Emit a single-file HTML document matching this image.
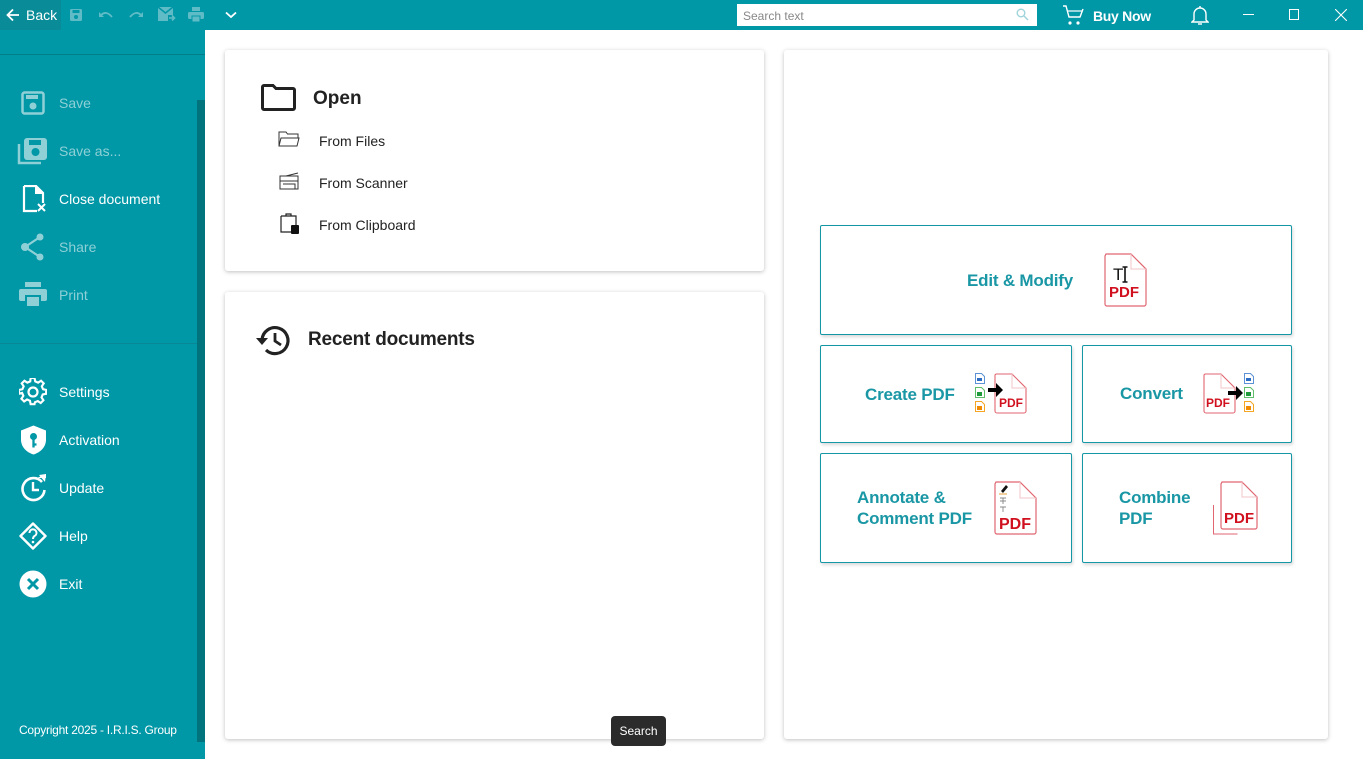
<!DOCTYPE html>
<html><head><meta charset="utf-8"><style>
*{margin:0;padding:0;box-sizing:border-box}
body{width:1363px;height:759px;overflow:hidden;background:#fff;font-family:"Liberation Sans",sans-serif;position:relative}
.abs{position:absolute}
.top{left:0;top:0;width:1363px;height:30px;background:#0097a6}
.side{left:0;top:30px;width:205px;height:729px;background:#0097a6}
.strip{left:197px;top:100px;width:8px;height:642px;background:#00737c}
.si{position:absolute;left:59px;font-size:14px;color:#fff;transform:translateY(-50%)}
.dim{color:#8fd0d7}
.ic{position:absolute;left:19px;transform:translateY(-50%)}
.card{position:absolute;background:#fff;box-shadow:0 1px 4px rgba(0,0,0,.25);border-radius:3px}
.tile{position:absolute;border:1px solid #1597a5;background:#fff;box-shadow:1px 2px 3px rgba(0,0,0,.15);border-radius:2px}
.tt{position:absolute;color:#1a97a5;font-size:17px;font-weight:bold;line-height:21px;letter-spacing:-0.2px}
.ot{position:absolute;font-size:14px;color:#222;transform:translateY(-50%)}
</style></head><body>
<div class="abs top"></div>
<div class="abs" style="left:0;top:0;width:61px;height:30px;background:#0a8b98"></div>
<svg class="abs" style="left:6px;top:8px" width="14" height="14" viewBox="0 0 14 14"><path d="M13 7H2M7 1.5L1.5 7 7 12.5" stroke="#fff" stroke-width="1.8" fill="none"/></svg>
<div class="abs" style="left:26px;top:7px;color:#fff;font-size:14px">Back</div>
<svg class="abs" style="left:69px;top:8px" width="14" height="14"><rect x="1" y="1" width="12" height="12" rx="1.5" fill="#5fbcc6"/><rect x="3.5" y="2" width="7" height="3" fill="#0097a6"/><circle cx="7" cy="9" r="2" fill="#0097a6"/></svg>
<svg class="abs" style="left:98px;top:9px" width="16" height="12"><path d="M3 6 Q8 1 14 8" stroke="#5fbcc6" stroke-width="1.8" fill="none"/><path d="M1 3v5h5z" fill="#5fbcc6"/></svg>
<svg class="abs" style="left:128px;top:9px" width="16" height="12"><path d="M13 6 Q8 1 2 8" stroke="#5fbcc6" stroke-width="1.8" fill="none"/><path d="M15 3v5h-5z" fill="#5fbcc6"/></svg>
<svg class="abs" style="left:158px;top:6px" width="18" height="17"><path d="M0 1h15v8h-5v6H0z" fill="#5fbcc6"/><path d="M0 1l7.5 6 7.5-6" stroke="#0097a6" stroke-width="1.5" fill="none"/><path d="M11 12h5M14 9.5l2.5 2.5-2.5 2.5" stroke="#5fbcc6" stroke-width="1.6" fill="none"/></svg>
<svg class="abs" style="left:188px;top:7px" width="16" height="16"><rect x="4" y="0" width="8" height="4" fill="#5fbcc6"/><rect x="0" y="5" width="16" height="7" rx="1.5" fill="#5fbcc6"/><rect x="4" y="9" width="8" height="6" fill="#5fbcc6" stroke="#0097a6" stroke-width="1"/></svg>
<svg class="abs" style="left:225px;top:11px" width="12" height="8"><path d="M1 1.5l5 4.5 5-4.5" stroke="#fff" stroke-width="1.8" fill="none"/></svg>
<div class="abs" style="left:737px;top:4px;width:300px;height:22px;background:#fff"></div>
<div class="abs" style="left:743px;top:9px;font-size:12px;color:#888">Search text</div>
<svg class="abs" style="left:1016px;top:8px" width="13" height="13"><circle cx="5" cy="5" r="3.8" stroke="#9fd4da" stroke-width="1.4" fill="none"/><path d="M8 8l4 4" stroke="#9fd4da" stroke-width="1.5"/></svg>
<svg class="abs" style="left:1063px;top:5px" width="22" height="21"><path d="M0 1h3l3 11h11l3-8" stroke="#fff" stroke-width="1.4" fill="none"/><path d="M5 6h14" stroke="#fff" stroke-width="1.2"/><circle cx="7" cy="18" r="1.6" fill="#fff"/><circle cx="15" cy="18" r="1.6" fill="#fff"/></svg>
<div class="abs" style="left:1093px;top:8px;color:#fff;font-size:14px;font-weight:bold;letter-spacing:-0.3px">Buy Now</div>
<svg class="abs" style="left:1191px;top:6px" width="18" height="19"><path d="M3 14V8a6 6 0 0 1 12 0v6l2 2H1z" stroke="#fff" stroke-width="1.4" fill="none"/><path d="M7 18h4" stroke="#fff" stroke-width="1.4"/><path d="M9 0v2" stroke="#fff" stroke-width="1.4"/></svg>
<div class="abs" style="left:1243px;top:14px;width:11px;height:1px;background:#fff"></div>
<div class="abs" style="left:1289px;top:9px;width:10px;height:11px;border:1px solid #fff"></div>
<svg class="abs" style="left:1335px;top:9px" width="12" height="12"><path d="M0 0l12 12M12 0L0 12" stroke="#fff" stroke-width="1.1"/></svg>

<div class="abs side"></div>
<div class="abs" style="left:0;top:54px;width:205px;height:1px;background:#007f8b"></div>
<div class="abs" style="left:0;top:343px;width:197px;height:1px;background:#0a8794"></div>
<div class="abs strip"></div>

<svg class="ic" style="top:103px;left:21px" width="24" height="24"><rect x="1.5" y="1.5" width="21" height="21" rx="2" stroke="#8fd0d7" stroke-width="2.5" fill="none"/><rect x="5" y="4" width="12" height="4" fill="#8fd0d7"/><circle cx="12" cy="15" r="3.5" fill="#8fd0d7"/></svg>
<div class="si dim" style="top:103px">Save</div>
<svg class="ic" style="top:151px;left:17px" width="32" height="30"><path d="M2 8v19h22" stroke="#8fd0d7" stroke-width="2.5" fill="none"/><rect x="7" y="2" width="23" height="22" rx="3" fill="#8fd0d7"/><rect x="12" y="4" width="12" height="5" fill="#0097a6"/><circle cx="18.5" cy="16" r="4" fill="#0097a6"/></svg>
<div class="si dim" style="top:151px">Save as...</div>
<svg class="ic" style="top:199px;left:22px" width="26" height="28"><path d="M2 1h12l7 7v10M15 26H2V1" stroke="#fff" stroke-width="2.2" fill="none"/><path d="M13 1v8h8" fill="#fff"/><path d="M16 19l7 7M23 19l-7 7" stroke="#fff" stroke-width="2"/></svg>
<div class="si" style="top:199px">Close document</div>
<svg class="ic" style="top:247px;left:20px" width="26" height="28"><circle cx="20" cy="4" r="3.5" fill="#8fd0d7"/><circle cx="5" cy="14" r="4" fill="#8fd0d7"/><circle cx="20" cy="24" r="3.5" fill="#8fd0d7"/><path d="M20 4L5 14l15 10" stroke="#8fd0d7" stroke-width="2.2" fill="none"/></svg>
<div class="si dim" style="top:247px">Share</div>
<svg class="ic" style="top:295px" width="28" height="26"><rect x="6" y="0" width="16" height="5" fill="#8fd0d7"/><rect x="0" y="7" width="28" height="12" rx="2" fill="#8fd0d7"/><rect x="7" y="14" width="14" height="11" fill="#8fd0d7" stroke="#0097a6" stroke-width="2"/></svg>
<div class="si dim" style="top:295px">Print</div>

<svg class="ic" style="top:392px;left:19px" width="28" height="28" viewBox="0 0 28 28"><path d="M12 1h4l.7 3.5 3 1.3 3-2 2.8 2.8-2 3 1.3 3L28 13.3v4l-3.5.7-1.3 3 2 3-2.8 2.8-3-2-3 1.3L16 28h-4l-.7-3.5-3-1.3-3 2-2.8-2.8 2-3-1.3-3L0 17.3v-4l3.5-.7 1.3-3-2-3L5.6 3.8l3 2 3-1.3z" transform="translate(0 -1) scale(.97)" stroke="#fff" stroke-width="2.2" fill="none"/><circle cx="14" cy="14" r="4.5" stroke="#fff" stroke-width="2.2" fill="none"/></svg>
<div class="si" style="top:392px">Settings</div>
<svg class="ic" style="top:440px;left:21px" width="25" height="29"><path d="M12.5 0L25 5v9c0 8-6 13-12.5 15C6 27 0 22 0 14V5z" fill="#fff"/><circle cx="12.5" cy="11" r="3.5" fill="#0097a6"/><path d="M12.5 13v9M12.5 19h3" stroke="#0097a6" stroke-width="2.3"/></svg>
<div class="si" style="top:440px">Activation</div>
<svg class="ic" style="top:488px;left:20px" width="28" height="28"><path d="M22 8A11 11 0 1 0 24.5 16" stroke="#fff" stroke-width="2.6" fill="none"/><path d="M17 4h9v-4z" fill="#fff"/><path d="M19 1l6 7 1-8z" fill="#fff"/><path d="M13 8v8h6" stroke="#fff" stroke-width="2.4" fill="none"/></svg>
<div class="si" style="top:488px">Update</div>
<svg class="ic" style="top:536px;left:19px" width="28" height="28"><path d="M14 1.5L26.5 14 14 26.5 1.5 14z" stroke="#fff" stroke-width="2.4" fill="none" stroke-linejoin="round"/><path d="M10.5 11a3.5 3.5 0 1 1 5 3c-1.3.8-1.5 1.5-1.5 3" stroke="#fff" stroke-width="2" fill="none"/><circle cx="14" cy="20" r="1.3" fill="#fff"/></svg>
<div class="si" style="top:536px">Help</div>
<svg class="ic" style="top:584px;left:19px" width="28" height="28"><circle cx="14" cy="14" r="13.5" fill="#fff"/><path d="M9 9l10 10M19 9L9 19" stroke="#0097a6" stroke-width="3"/></svg>
<div class="si" style="top:584px">Exit</div>
<div class="abs" style="left:19px;top:723px;color:#fff;font-size:12px;letter-spacing:-0.25px">Copyright 2025 - I.R.I.S. Group</div>

<!-- Open card -->
<div class="card" style="left:225px;top:50px;width:539px;height:221px"></div>
<svg class="abs" style="left:261px;top:84px" width="35" height="27"><path d="M1.5 3a1.5 1.5 0 0 1 1.5-1.5h9l3 3h17a1.5 1.5 0 0 1 1.5 1.5v18a1.5 1.5 0 0 1-1.5 1.5H3a1.5 1.5 0 0 1-1.5-1.5z" stroke="#222" stroke-width="3" fill="none"/></svg>
<div class="abs" style="left:313px;top:88px;font-size:19px;font-weight:bold;color:#222">Open</div>
<svg class="abs" style="left:278px;top:131px" width="22" height="16"><path d="M1 15V1h7l1.5 2H20v4M1 15l2-8h18l-2 8z" stroke="#333" stroke-width="1" fill="none"/></svg>
<div class="ot" style="left:319px;top:141px">From Files</div>
<svg class="abs" style="left:278px;top:172px" width="22" height="18"><path d="M2 4h18v13H2zM2 9h18M5 12h12v5M8 4l12-3" stroke="#333" stroke-width="1" fill="none"/></svg>
<div class="ot" style="left:319px;top:183px">From Scanner</div>
<svg class="abs" style="left:280px;top:213px" width="20" height="21"><path d="M1 3h15v10M11 19H1V3M6 3V1h5v2" stroke="#222" stroke-width="1.2" fill="none"/><rect x="11" y="12" width="8" height="9" rx="1" fill="#111"/></svg>
<div class="ot" style="left:319px;top:225px">From Clipboard</div>

<!-- Recent -->
<div class="card" style="left:225px;top:292px;width:539px;height:447px"></div>
<svg class="abs" style="left:254px;top:323px" width="38" height="34"><path d="M8 17A13 13 0 1 1 12 27" stroke="#222" stroke-width="3.2" fill="none"/><path d="M2 15h12l-6 7z" fill="#222"/><path d="M21 10v8l6 4" stroke="#222" stroke-width="2.8" fill="none"/></svg>
<div class="abs" style="left:308px;top:329px;font-size:19px;font-weight:bold;color:#222;letter-spacing:-0.2px">Recent documents</div>

<!-- right card -->
<div class="card" style="left:784px;top:50px;width:544px;height:689px"></div>

<div class="tile" style="left:820px;top:225px;width:472px;height:110px"></div>
<div class="tt" style="left:967px;top:270px">Edit &amp; Modify</div>
<svg class="abs" style="left:1104px;top:253px" width="43" height="54" viewBox="0 0 43 54"><path d="M2 1h25l15 15v35a2 2 0 0 1-2 2H3a2 2 0 0 1-2-2V3z" stroke="#e06670" stroke-width="1.2" fill="#fff"/><path d="M27 1v15h15" stroke="#f3c4c8" stroke-width="1" fill="none"/><text x="9" y="27" font-family="Liberation Sans" font-size="17" fill="#111">T</text><path d="M21 14v15M18.5 14h5M18.5 29h5" stroke="#111" stroke-width="1.6"/><text x="5" y="44" font-family="Liberation Sans" font-weight="bold" font-size="15" fill="#d0101e">PDF</text></svg>

<div class="tile" style="left:820px;top:345px;width:252px;height:98px"></div>
<div class="tt" style="left:865px;top:384px">Create PDF</div>
<svg class="abs" style="left:974px;top:372px" width="54" height="42"><g fill="none" stroke-width="1"><path d="M1.5 1.5h6l3 3v7h-9z" stroke="#5e92d6"/><path d="M1.5 15.5h6l3 3v7h-9z" stroke="#5fbf6a"/><path d="M1.5 29.5h6l3 3v7h-9z" stroke="#f5a623"/></g><rect x="3" y="6" width="5" height="3" fill="#2b6cc4"/><rect x="3" y="20" width="5" height="4" fill="#1e9a3a"/><rect x="3" y="34" width="5" height="4" fill="#f08a00"/><path d="M22 2h16l14 14v23a2 2 0 0 1-2 2H23a2 2 0 0 1-2-2V3z" stroke="#e06670" stroke-width="1.1" fill="#fff"/><path d="M38 2v14h14" stroke="#f3c4c8" fill="none"/><path d="M14 16h8v-5l7 7-7 7v-5h-8z" fill="#000"/><text x="25" y="35" font-family="Liberation Sans" font-size="12" font-weight="bold" fill="#d0101e">PDF</text></svg>

<div class="tile" style="left:1082px;top:345px;width:210px;height:98px"></div>
<div class="tt" style="left:1120px;top:383px">Convert</div>
<svg class="abs" style="left:1202px;top:372px" width="54" height="42"><path d="M3 2h16l14 14v23a2 2 0 0 1-2 2H4a2 2 0 0 1-2-2V3z" stroke="#e06670" stroke-width="1.1" fill="#fff"/><path d="M19 2v14h14" stroke="#f3c4c8" fill="none"/><text x="4" y="35" font-family="Liberation Sans" font-size="12" font-weight="bold" fill="#d0101e">PDF</text><path d="M26 19h8v-5l7 7-7 7v-5h-8z" fill="#000"/><g fill="none" stroke-width="1"><path d="M42.5 1.5h6l3 3v7h-9z" stroke="#5e92d6"/><path d="M42.5 15.5h6l3 3v7h-9z" stroke="#5fbf6a"/><path d="M42.5 29.5h6l3 3v7h-9z" stroke="#f5a623"/></g><rect x="44" y="6" width="5" height="3" fill="#2b6cc4"/><rect x="44" y="20" width="5" height="4" fill="#1e9a3a"/><rect x="44" y="34" width="5" height="4" fill="#f08a00"/></svg>

<div class="tile" style="left:820px;top:453px;width:252px;height:110px"></div>
<div class="tt" style="left:857px;top:487px">Annotate &amp;<br>Comment PDF</div>
<svg class="abs" style="left:994px;top:481px" width="43" height="54"><path d="M2 1h24l16 16v34a2 2 0 0 1-2 2H3a2 2 0 0 1-2-2V3z" stroke="#e06670" stroke-width="1.2" fill="#fff"/><path d="M26 1v16h16" stroke="#f3c4c8" fill="none"/><path d="M7 10l5-6 2 2-5 6z" fill="#111"/><path d="M5 13h8" stroke="#e6a23c"/><path d="M6 17h6M9 17v6M6 20h6" stroke="#888" stroke-width=".9"/><path d="M6 26h6M9 26v5" stroke="#888" stroke-width=".9"/><text x="5" y="48" font-family="Liberation Sans" font-size="16" font-weight="bold" fill="#d0101e">PDF</text></svg>

<div class="tile" style="left:1082px;top:453px;width:210px;height:110px"></div>
<div class="tt" style="left:1119px;top:487px">Combine<br>PDF</div>
<svg class="abs" style="left:1212px;top:481px" width="46" height="55"><path d="M1.5 24v29h24" stroke="#e06670" stroke-width="1" fill="none"/><path d="M10 1h20l15 15v30a2 2 0 0 1-2 2H11a2 2 0 0 1-2-2V3z" stroke="#e06670" stroke-width="1.2" fill="#fff"/><path d="M30 1v15h15" stroke="#f3c4c8" fill="none"/><text x="12" y="42" font-family="Liberation Sans" font-size="15" font-weight="bold" fill="#d0101e">PDF</text></svg>

<div class="abs" style="left:611px;top:716px;width:55px;height:30px;background:#2b2b2b;border-radius:4px;color:#fff;font-size:12px;text-align:center;line-height:30px">Search</div>
</body></html>
